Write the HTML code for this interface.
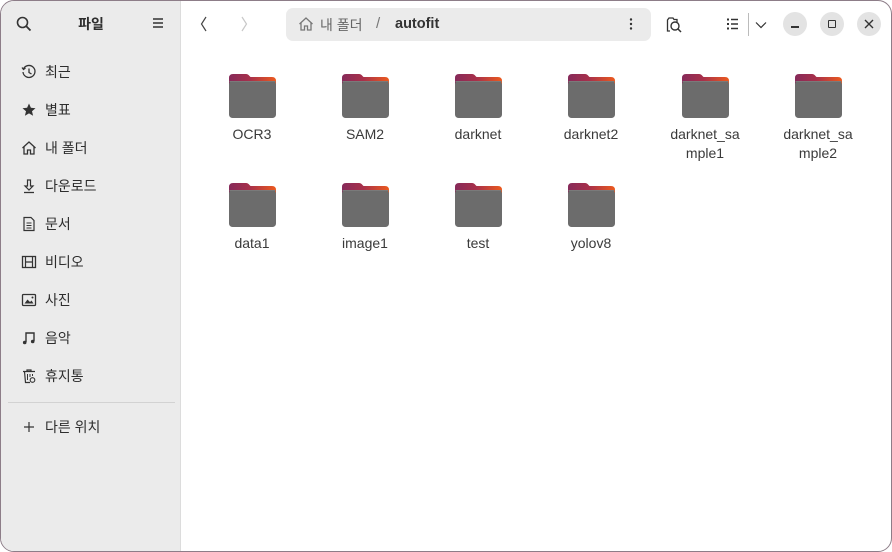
<!DOCTYPE html>
<html><head><meta charset="utf-8"><style>
*{margin:0;padding:0;box-sizing:border-box}
html,body{width:892px;height:552px;background:#fff;overflow:hidden}
body{font-family:"Liberation Sans","Noto Sans CJK KR",sans-serif;color:#303030}
.win{position:absolute;left:0;top:0;width:892px;height:552px;border:1px solid #8d7d88;border-radius:14px;overflow:hidden;background:#fff}
.side{position:absolute;left:0;top:0;width:180px;height:552px;background:#ebebeb;border-right:1px solid #dcdcdc}
.title{position:absolute;left:0;top:13px;width:180px;text-align:center;font-size:14px;font-weight:bold;color:#2e2e2e}
.item{position:absolute;left:20px;font-size:14px;color:#2e2e2e;display:flex;align-items:center;height:20px}
.item svg{width:16px;height:16px;margin-right:8px}
.sep{position:absolute;left:7px;top:401px;width:167px;height:1px;background:#d2d2d2}
.path{position:absolute;left:285px;top:7px;width:365px;height:33px;background:#ebebeb;border-radius:7px}
.btnc{position:absolute;top:11px;width:24px;height:24px;border-radius:50%;background:#e3e3e3}
.f{position:absolute;width:90px;text-align:center;font-size:14px;color:#3a3a3a;line-height:19px}
.f svg{display:block;margin:0 auto 7px}
</style></head><body>
<svg width="0" height="0" style="position:absolute"><defs>
<linearGradient id="g" x1="0" x2="1" y1="0" y2="0"><stop offset="0" stop-color="#862a5a"/><stop offset="0.45" stop-color="#a8304a"/><stop offset="1" stop-color="#ec5a1e"/></linearGradient>
<symbol id="fd" viewBox="0 0 47 44"><path d="M0 4Q0 0 4 0H17Q19 0 20.5 2L21.5 3H43Q47 3 47 7V20H0Z" fill="url(#g)"/><rect x="0" y="7" width="47" height="37" rx="3.5" fill="#6c6c6c"/><rect x="0.5" y="7" width="46" height="1" fill="#7a7a7a"/></symbol>
</defs></svg>
<div class="win">
<div class="side">
 <svg style="position:absolute;left:15px;top:15px" width="16" height="16" viewBox="0 0 16 16"><circle cx="6.5" cy="6.5" r="5" fill="none" stroke="#333" stroke-width="1.6"/><path d="M10.3 10.3L14.5 14.5" stroke="#333" stroke-width="1.8"/></svg>
 <div class="title">파일</div>
 <svg style="position:absolute;left:151px;top:16px" width="12" height="12" viewBox="0 0 12 12"><path d="M1 2H11M1 6H11M1 10H11" stroke="#333" stroke-width="1.4"/></svg>
 <div class="item" style="top:61px"><svg viewBox="0 0 16 16"><path d="M2.5 5A6 6 0 1 1 2 8" fill="none" stroke="#333" stroke-width="1.3"/><path d="M1 3.5L2.5 5.5 4.5 4" fill="none" stroke="#333" stroke-width="1.2"/><path d="M8 4.5V8.5L10.5 10" fill="none" stroke="#333" stroke-width="1.3"/></svg>최근</div>
 <div class="item" style="top:99px"><svg viewBox="0 0 16 16"><path d="M8 1.5L9.9 5.8 14.5 6.2 11 9.2 12.1 13.8 8 11.4 3.9 13.8 5 9.2 1.5 6.2 6.1 5.8Z" fill="#333"/></svg>별표</div>
 <div class="item" style="top:137px"><svg viewBox="0 0 16 16"><path d="M1.5 8L8 2 14.5 8M3 7V14H6.5V10H9.5V14H13V7" fill="none" stroke="#333" stroke-width="1.3"/></svg>내 폴더</div>
 <div class="item" style="top:175px"><svg viewBox="0 0 16 16"><path d="M6.5 2H9.5V8H12L8 12 4 8H6.5Z" fill="none" stroke="#333" stroke-width="1.2"/><path d="M3 14.5H13" stroke="#333" stroke-width="1.3"/></svg>다운로드</div>
 <div class="item" style="top:213px"><svg viewBox="0 0 16 16"><path d="M3 1.5H10L13 4.5V14.5H3Z" fill="none" stroke="#333" stroke-width="1.2"/><path d="M5.5 7H10.5M5.5 9.5H10.5M5.5 12H10.5" stroke="#333" stroke-width="1"/></svg>문서</div>
 <div class="item" style="top:251px"><svg viewBox="0 0 16 16"><rect x="1.5" y="2.5" width="13" height="11" fill="none" stroke="#333" stroke-width="1.3"/><path d="M4.5 2.5V13.5M11.5 2.5V13.5M4.5 8H11.5" stroke="#333" stroke-width="1.2"/></svg>비디오</div>
 <div class="item" style="top:289px"><svg viewBox="0 0 16 16"><rect x="1.5" y="2.5" width="13" height="11" rx="1" fill="none" stroke="#333" stroke-width="1.3"/><path d="M3.5 11.5L6.5 7.5 9 10 10.5 8.5 12.5 11.5Z" fill="#333"/><circle cx="11.5" cy="5.5" r="1" fill="#333"/></svg>사진</div>
 <div class="item" style="top:327px"><svg viewBox="0 0 16 16"><path d="M5 12V3H13V11" fill="none" stroke="#333" stroke-width="1.4"/><circle cx="3.7" cy="12.5" r="1.8" fill="#333"/><circle cx="11.7" cy="11.5" r="1.8" fill="#333"/></svg>음악</div>
 <div class="item" style="top:365px"><svg viewBox="0 0 16 16"><path d="M2 3.5H14M6 3.5V2H10V3.5M3.5 3.5L4.5 14.5H9" fill="none" stroke="#333" stroke-width="1.2"/><path d="M6.5 6V12M9 6V9M11.5 6V8" stroke="#333" stroke-width="1"/><circle cx="11.5" cy="12" r="2.3" fill="none" stroke="#333" stroke-width="1.1"/></svg>휴지통</div>
 <div class="sep"></div>
 <div class="item" style="top:416px"><svg viewBox="0 0 16 16"><path d="M8 3V13M3 8H13" stroke="#333" stroke-width="1.2"/></svg>다른 위치</div>
</div>
<svg style="position:absolute;left:197px;top:15px" width="12" height="16" viewBox="0 0 12 16"><path d="M8 1L3.5 8 8 15" fill="none" stroke="#444" stroke-width="1.2"/></svg>
<svg style="position:absolute;left:237px;top:15px" width="12" height="16" viewBox="0 0 12 16"><path d="M4 1L8.5 8 4 15" fill="none" stroke="#c8c8c8" stroke-width="1.2"/></svg>
<div class="path">
 <svg style="position:absolute;left:12px;top:8px" width="16" height="16" viewBox="0 0 16 16"><path d="M1.5 8L8 2 14.5 8M3 7V14H6.5V10H9.5V14H13V7" fill="none" stroke="#777" stroke-width="1.3"/></svg>
 <span style="position:absolute;left:34px;top:7px;font-size:14px;color:#666">내 폴더</span>
 <span style="position:absolute;left:90px;top:7px;font-size:15px;color:#777">/</span>
 <span style="position:absolute;left:109px;top:8px;font-size:14.5px;font-weight:bold;color:#333">autofit</span>
 <svg style="position:absolute;left:343px;top:9px" width="4" height="14" viewBox="0 0 4 14"><circle cx="2" cy="2.5" r="1.2" fill="#333"/><circle cx="2" cy="7" r="1.2" fill="#333"/><circle cx="2" cy="11.5" r="1.2" fill="#333"/></svg>
</div>
<svg style="position:absolute;left:664px;top:15px" width="18" height="17" viewBox="0 0 18 17"><path d="M5 15H2.5V4L4 2H8L9 3.5H12V6" fill="none" stroke="#333" stroke-width="1.3"/><circle cx="10" cy="10" r="4" fill="none" stroke="#333" stroke-width="1.4"/><path d="M13 13L16 16" stroke="#333" stroke-width="1.5"/></svg>
<svg style="position:absolute;left:725px;top:17px" width="13" height="12" viewBox="0 0 13 12"><path d="M1 1.5H3M1 6H3M1 10.5H3" stroke="#333" stroke-width="2"/><path d="M5 1.5H12M5 6H12M5 10.5H12" stroke="#333" stroke-width="1.4"/></svg>
<div style="position:absolute;left:747px;top:12px;width:1px;height:23px;background:#bbb"></div>
<svg style="position:absolute;left:754px;top:20px" width="12" height="8" viewBox="0 0 12 8"><path d="M1 1.5L6 6.5 11 1.5" fill="none" stroke="#333" stroke-width="1.2"/></svg>
<div class="btnc" style="left:782px"><div style="position:absolute;left:8px;top:14px;width:8px;height:1.5px;background:#333"></div></div>
<div class="btnc" style="left:819px"><div style="position:absolute;left:8px;top:8px;width:8px;height:8px;border:1.4px solid #333;border-radius:1px"></div></div>
<div class="btnc" style="left:856px"><svg style="position:absolute;left:7px;top:7px" width="10" height="10" viewBox="0 0 10 10"><path d="M1 1L9 9M9 1L1 9" stroke="#333" stroke-width="1.4"/></svg></div>

<div class="f" style="left:206px;top:73px"><svg width="47" height="44"><use href="#fd"/></svg>OCR3</div>
<div class="f" style="left:319px;top:73px"><svg width="47" height="44"><use href="#fd"/></svg>SAM2</div>
<div class="f" style="left:432px;top:73px"><svg width="47" height="44"><use href="#fd"/></svg>darknet</div>
<div class="f" style="left:545px;top:73px"><svg width="47" height="44"><use href="#fd"/></svg>darknet2</div>
<div class="f" style="left:659px;top:73px"><svg width="47" height="44"><use href="#fd"/></svg>darknet_sa<br>mple1</div>
<div class="f" style="left:772px;top:73px"><svg width="47" height="44"><use href="#fd"/></svg>darknet_sa<br>mple2</div>
<div class="f" style="left:206px;top:182px"><svg width="47" height="44"><use href="#fd"/></svg>data1</div>
<div class="f" style="left:319px;top:182px"><svg width="47" height="44"><use href="#fd"/></svg>image1</div>
<div class="f" style="left:432px;top:182px"><svg width="47" height="44"><use href="#fd"/></svg>test</div>
<div class="f" style="left:545px;top:182px"><svg width="47" height="44"><use href="#fd"/></svg>yolov8</div>
</div>
</body></html>
